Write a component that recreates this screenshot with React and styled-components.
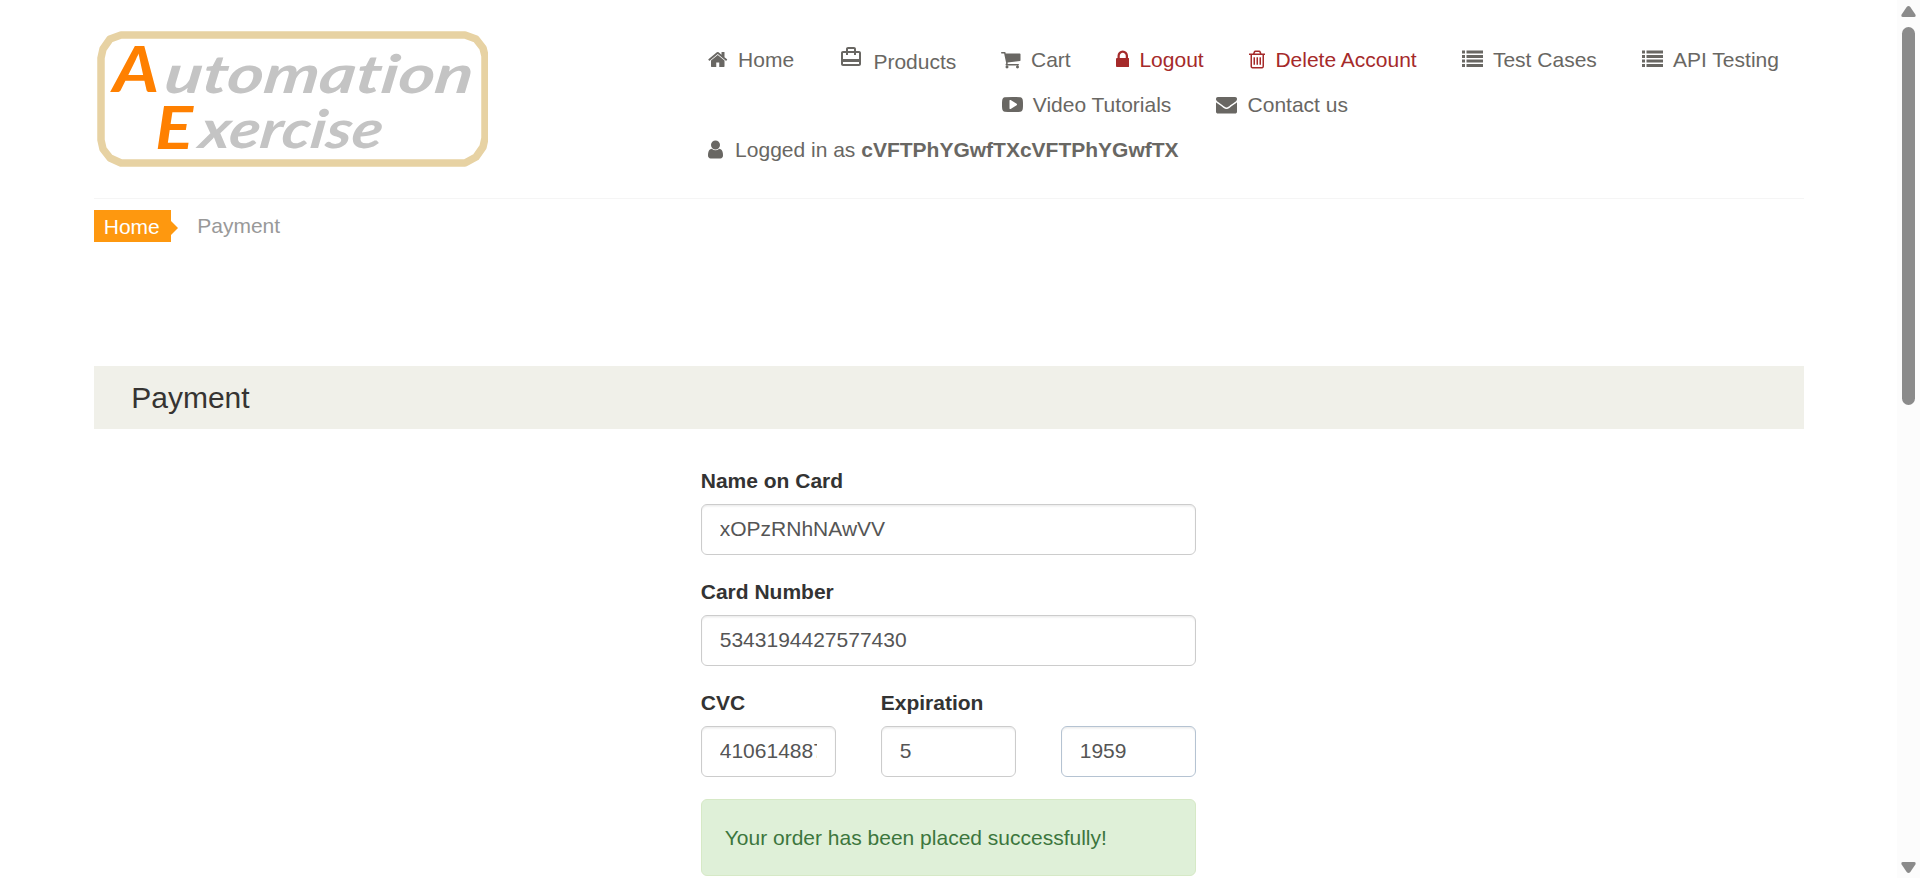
import React from "react";
import styled, { createGlobalStyle } from "styled-components";
import { MdCardTravel } from "react-icons/md";

const GlobalStyle = createGlobalStyle`
  * { box-sizing: border-box; }
  html, body { margin: 0; background: #fff; overflow: hidden; }
  body { font: 21px/30px "Liberation Sans", Arial, sans-serif; color: #333; }
`;

const Window = styled.div`
  display: flex;
  width: 1920px;
  height: 878px;
  overflow: hidden;
`;

const Page = styled.main`
  flex: 1;
  padding: 0 93px 0 93.75px;
`;

const Header = styled.header`
  display: flex;
  height: 199px;
  border-bottom: 1px solid #f5f5f5;
`;

const Logo = styled.svg`
  display: block;
  width: 391px;
  height: 140px;
  margin: 30px 220.6px 0 3px;
  flex: none;
`;

const Nav = styled.nav`
  display: flex;
  flex-direction: column;
  padding-top: 45px;
`;

const NavRow = styled.div`
  display: flex;
  height: 45px;
  gap: 45px;
  padding-left: ${(p) => p.$indent || 0}px;
`;

const NavLink = styled.a`
  display: flex;
  height: 30px;
  gap: 10.25px;
  white-space: nowrap;
  color: ${(p) => (p.$danger ? "#a52a2a" : "#696763")};
`;

const Glyph = styled.svg`
  display: block;
  flex: none;
  height: 21px;
  width: ${(p) => p.$width}px;
  margin-top: 4px;
  fill: currentColor;
`;

const TravelIcon = styled(MdCardTravel)`
  width: 24px;
  height: 24px;
  flex: none;
`;

const LowText = styled.span`
  margin-top: 2px;
`;

const Breadcrumb = styled.div`
  display: flex;
  margin-top: 11px;
  height: 32px;
`;

const Crumb = styled.a`
  display: flex;
  align-items: center;
  width: 77px;
  padding: 2px 0 0 10px;
  background: #fe980f;
  color: #fff;
`;

const CrumbArrow = styled.span`
  align-self: center;
  margin-top: 3.5px;
  margin-right: 19.5px;
  border: 7px solid transparent;
  border-left-color: #fe980f;
  border-right-width: 0;
`;

const CurrentCrumb = styled.span`
  color: #999;
  line-height: 32px;
`;

const Heading = styled.h2`
  margin: 124px 0 0;
  height: 63px;
  padding-left: 37.5px;
  background: #f0f0e9;
  color: #363432;
  font-size: 30px;
  font-weight: 400;
  line-height: 63px;
`;

const Form = styled.form`
  width: 495px;
  margin: 37px 0 0 607px;
`;

const Row = styled.div`
  display: flex;
  justify-content: space-between;
`;

const Field = styled.label`
  display: flex;
  flex-direction: column;
  width: ${(p) => (p.$small ? "135px" : "100%")};
  height: 111px;
`;

const Label = styled.span`
  height: 38px;
  font-weight: 700;
`;

const Input = styled.input`
  width: 100%;
  height: 51px;
  padding: 8px 18px 10px;
  border: 1px solid ${(p) => (p.$tinted ? "#b5c3d2" : "#ccc")};
  border-radius: 6px;
  outline: 0;
  background: #fff;
  box-shadow: inset 0 1.5px 1.5px rgba(0, 0, 0, 0.075);
  color: #555;
  font: inherit;
`;

const Alert = styled.div`
  height: 77px;
  padding: 23px;
  border: 1px solid #d6e9c6;
  border-radius: 6px;
  background: #dff0d8;
  color: #3c763d;
`;

const Scrollbar = styled.aside`
  display: flex;
  flex-direction: column;
  align-items: center;
  justify-content: space-between;
  width: 23px;
  padding: 6px 0 5px;
  background: #fcfcfc;
`;

const Thumb = styled.div`
  width: 13px;
  height: 378px;
  margin: 10px 0 auto;
  border-radius: 7px;
  background: #8b8b8b;
`;

const Arrow = styled.svg`
  display: block;
  width: 15px;
  height: 11px;
  fill: #8b8b8b;
  transform: ${(p) => (p.$down ? "rotate(180deg)" : "none")};
`;

const icons = {
  home: [64, 1664, "M1472 992v480q0 26-19 45t-45 19h-384v-384h-256v384h-384q-26 0-45-19t-19-45v-480q0-1 .5-3t.5-3l575-474 575 474q1 2 1 6zm223-69l-62 74q-8 9-21 11h-3q-13 0-21-7l-692-577-692 577q-12 8-24 7-13-2-21-11l-62-74q-8-10-7-23.5t11-21.5l719-599q32-26 76-26t76 26l244 204v-195q0-14 9-23t23-9h192q14 0 23 9t9 23v408l219 182q10 8 11 21.5t-7 23.5z"],
  cart: [64, 1664, "M704 1536q0 52-38 90t-90 38-90-38-38-90 38-90 90-38 90 38 38 90zm896 0q0 52-38 90t-90 38-90-38-38-90 38-90 90-38 90 38 38 90zm128-1088v512q0 24-16.5 42.5t-40.5 21.5l-1044 122q13 60 13 70 0 16-24 64h920q26 0 45 19t19 45-19 45-45 19h-1024q-26 0-45-19t-19-45q0-11 8-31.5t16-36 21.5-40 15.5-29.5l-177-823h-204q-26 0-45-19t-19-45 19-45 45-19h256q16 0 28.5 6.5t19.5 15.5 13 24.5 8 26 5.5 29.5 4.5 26h1201q26 0 45 19t19 45z"],
  lock: [320, 1152, "M640 768h512v-192q0-106-75-181t-181-75-181 75-75 181v192zm832 96v576q0 40-28 68t-68 28h-960q-40 0-68-28t-28-68v-576q0-40 28-68t68-28h32v-192q0-184 132-316t316-132 316 132 132 316v192h32q40 0 68 28t28 68z"],
  trash: [192, 1408, "M704 736v576q0 14-9 23t-23 9h-64q-14 0-23-9t-9-23v-576q0-14 9-23t23-9h64q14 0 23 9t9 23zm256 0v576q0 14-9 23t-23 9h-64q-14 0-23-9t-9-23v-576q0-14 9-23t23-9h64q14 0 23 9t9 23zm256 0v576q0 14-9 23t-23 9h-64q-14 0-23-9t-9-23v-576q0-14 9-23t23-9h64q14 0 23 9t9 23zm128 724v-948h-896v948q0 22 7 40.5t14.5 27 10.5 8.5h832q3 0 10.5-8.5t14.5-27 7-40.5zm-672-1076h448l-48-117q-7-9-17-11h-317q-10 2-17 11zm928 32v64q0 14-9 23t-23 9h-96v948q0 83-47 143.5t-113 60.5h-832q-66 0-113-58.5t-47-141.5v-952h-96q-14 0-23-9t-9-23v-64q0-14 9-23t23-9h309l70-167q15-37 54-63t79-26h320q40 0 79 26t54 63l70 167h309q14 0 23 9t9 23z"],
  list: [0, 1792, "M0 128h256v256H0zM384 128h1408v256H384zM0 512h256v256H0zM384 512h1408v256H384zM0 896h256v256H0zM384 896h1408v256H384zM0 1280h256v256H0zM384 1280h1408v256H384z"],
  video: [0, 1792, "M1280 896q0-37-30-54l-512-320q-31-20-65-2-33 18-33 56v640q0 38 33 56 16 8 31 8 20 0 34-10l512-320q30-17 30-54zm512 0q0 96-1 150t-8.5 136.5-22.5 147.5q-16 73-69 123t-124 58q-222 25-671 25t-671-25q-71-8-124.5-58t-69.5-123q-14-65-21.5-147.5t-8.5-136.5-1-150 1-150 8.5-136.5 22.5-147.5q16-73 69-123t124-58q222-25 671-25t671 25q71 8 124.5 58t69.5 123q14 65 21.5 147.5t8.5 136.5 1 150z"],
  envelope: [0, 1792, "M1792 710v794q0 66-47 113t-113 47h-1472q-66 0-113-47t-47-113v-794q44 49 101 87 362 246 497 345 57 42 92.5 65.5t94.5 48 110 24.5h2q51 0 110-24.5t94.5-48 92.5-65.5q170-123 498-345 57-39 100-87zm0-294q0 79-49 151t-122 123q-376 261-468 325-10 7-42.5 31t-54 38.5-52 32.5-57.5 27-50 9h-2q-23 0-50-9t-57.5-27-52-32.5-54-38.5-42.5-31q-91-64-262-182.5t-205-142.5q-62-42-117-115.5t-55-136.5q0-78 41.5-130t118.5-52h1472q65 0 112.5 47t47.5 113z"],
  user: [256, 1408, "M1536 1399q0 109-62.5 187t-150.5 78h-854q-88 0-150.5-78t-62.5-187q0-85 8.5-160.5t31.5-152 58.5-131 94-89 134.5-34.5q131 128 313 128t313-128q76 0 134.5 34.5t94 89 58.5 131 31.5 152 8.5 160.5zm-256-887q0 159-112.5 271.5t-271.5 112.5-271.5-112.5-112.5-271.5 112.5-271.5 271.5-112.5 271.5 112.5 112.5 271.5z"],
};

function NavIcon({ name }) {
  const [x, width, d] = icons[name];
  return (
    <Glyph $width={(width * 21) / 1792} viewBox={`${x} 0 ${width} 1792`} aria-hidden="true">
      <path d={d} />
    </Glyph>
  );
}

function NavItem({ icon, danger, children }) {
  return (
    <NavLink $danger={danger}>
      <NavIcon name={icon} />
      <span>{children}</span>
    </NavLink>
  );
}

const LogoText = styled.text`
  font-family: Lato, sans-serif;
  font-style: italic;
  font-weight: 700;
  font-variant-ligatures: none;
  font-size: ${(p) => p.$size}px;
  fill: ${(p) => (p.$initial ? "#ff8000" : "#c4c4c4")};
`;

function BrandLogo() {
  return (
    <Logo viewBox="0 0 391 140" role="img" aria-label="Automation Exercise">
      <path
        d="M24 5H368L379 9L386 18L388 26V108L386 117L379 127L368 133H24L13 128L6 119L4 110V28L6 19L13 9Z"
        fill="none"
        stroke="#e7d2a3"
        strokeWidth="7.5"
        strokeLinejoin="round"
      />
      <LogoText $initial $size={64} x="16" y="62" textLength="46" lengthAdjust="spacingAndGlyphs">A</LogoText>
      <g transform="translate(66 62.5) skewX(-8)">
        <LogoText $size={53} textLength="308" lengthAdjust="spacingAndGlyphs">utomation</LogoText>
      </g>
      <LogoText $initial $size={60} x="58" y="118.5" textLength="38" lengthAdjust="spacingAndGlyphs">E</LogoText>
      <g transform="translate(101 118) skewX(-8)">
        <LogoText $size={53} textLength="183" lengthAdjust="spacingAndGlyphs">xercise</LogoText>
      </g>
    </Logo>
  );
}

function ScrollArrow({ down }) {
  return (
    <Arrow $down={down} viewBox="0 0 15 11">
      <path d="M7.5 0Q8.5 0 9.3 1L14.4 8.5Q15.3 11 13 11H2Q-.3 11 .6 8.5L5.7 1Q6.5 0 7.5 0Z" />
    </Arrow>
  );
}

function TextField({ label, value, small, tinted }) {
  return (
    <Field $small={small}>
      <Label>{label}</Label>
      <Input $tinted={tinted} defaultValue={value} />
    </Field>
  );
}

export default function App() {
  return (
    <>
      <GlobalStyle />
      <Window>
        <Page>
          <Header>
            <BrandLogo />
            <Nav>
              <NavRow>
                <NavItem icon="home">Home</NavItem>
                <NavLink>
                  <TravelIcon />
                  <LowText>Products</LowText>
                </NavLink>
                <NavItem icon="cart">Cart</NavItem>
                <NavItem icon="lock" danger>Logout</NavItem>
                <NavItem icon="trash" danger>Delete Account</NavItem>
                <NavItem icon="list">Test Cases</NavItem>
                <NavItem icon="list">API Testing</NavItem>
              </NavRow>
              <NavRow $indent={293.2}>
                <NavItem icon="video">Video Tutorials</NavItem>
                <NavItem icon="envelope">Contact us</NavItem>
              </NavRow>
              <NavRow>
                <NavItem icon="user">Logged in as <b>cVFTPhYGwfTXcVFTPhYGwfTX</b></NavItem>
              </NavRow>
            </Nav>
          </Header>
          <Breadcrumb>
            <Crumb>Home</Crumb>
            <CrumbArrow />
            <CurrentCrumb>Payment</CurrentCrumb>
          </Breadcrumb>
          <Heading>Payment</Heading>
          <Form>
            <TextField label="Name on Card" value="xOPzRNhNAwVV" />
            <TextField label="Card Number" value="5343194427577430" />
            <Row>
              <TextField small label="CVC" value="410614887" />
              <TextField small label="Expiration" value="5" />
              <TextField small tinted label="" value="1959" />
            </Row>
            <Alert>Your order has been placed successfully!</Alert>
          </Form>
        </Page>
        <Scrollbar>
          <ScrollArrow />
          <Thumb />
          <ScrollArrow down />
        </Scrollbar>
      </Window>
    </>
  );
}
